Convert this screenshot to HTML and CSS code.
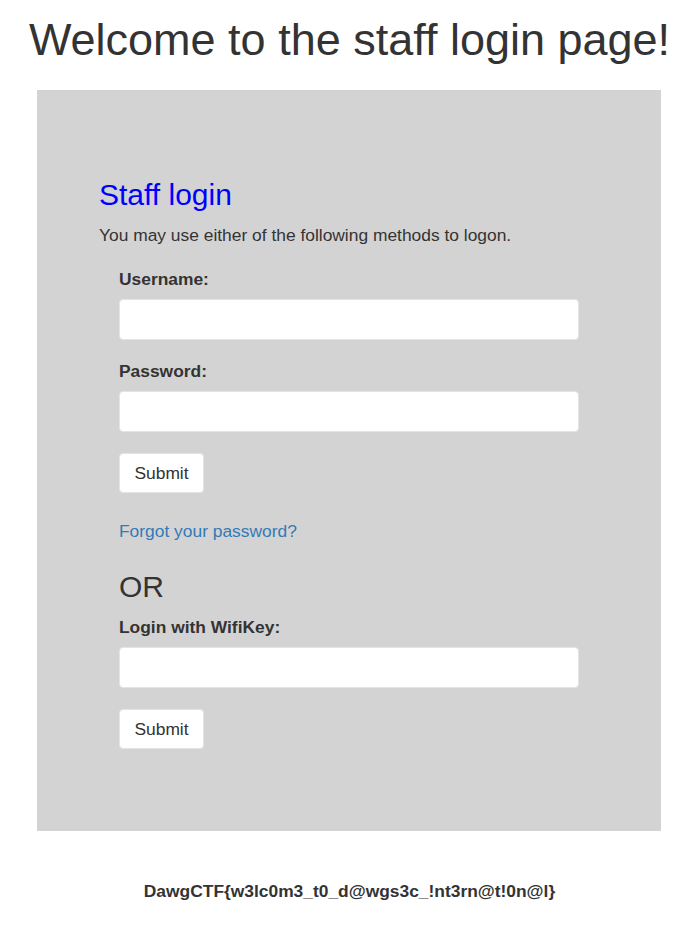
FILE: index.html
```html
<!DOCTYPE html>
<html lang="en">
<head>
<meta charset="utf-8">
<title>Staff login</title>
<link rel="stylesheet" href="styles.css">
</head>
<body>
<h1 class="page-title">Welcome to the staff login page!</h1>
<div class="login-box">
  <h2 class="login-title">Staff login</h2>
  <p class="login-intro">You may use either of the following methods to logon.</p>
  <form class="login-form">
    <label class="field-label" for="username">Username:</label>
    <input class="field-input" id="username" type="text">
    <label class="field-label field-label-next" for="password">Password:</label>
    <input class="field-input" id="password" type="password">
    <button class="submit-btn" type="button">Submit</button>
    <a class="forgot-link" href="#">Forgot your password?</a>
    <div class="or-text">OR</div>
    <label class="field-label field-label-wifi" for="wifikey">Login with WifiKey:</label>
    <input class="field-input" id="wifikey" type="text">
    <button class="submit-btn" type="button">Submit</button>
  </form>
</div>
<p class="flag">DawgCTF{w3lc0m3_t0_d@wgs3c_!nt3rn@t!0n@l}</p>
</body>
</html>
```

FILE: styles.css
```css
html, body {
  margin: 0;
  padding: 0;
  background: #ffffff;
}

body {
  font-family: "Liberation Sans", Arial, sans-serif;
  color: #333333;
  font-size: 17.4px;
  line-height: 24px;
  padding-top: 14px;
}

.page-title {
  margin: 0 0 24px;
  font-size: 45px;
  line-height: 52px;
  font-weight: 400;
  text-align: center;
  color: #333333;
}

.login-box {
  width: 624px;
  margin-left: 37px;
  background: #d3d3d3;
  padding: 88px 62px 82px;
  box-sizing: border-box;
}

.login-title {
  margin: 0;
  font-size: 30px;
  line-height: 34px;
  font-weight: 400;
  color: #0000ff;
}

.login-intro {
  margin: 11px 0 0;
}

.login-form {
  display: flex;
  flex-direction: column;
  align-items: flex-start;
  padding-left: 20px;
  margin-top: 20px;
}

.field-label {
  display: block;
  font-weight: 700;
  margin-bottom: 8px;
}

.field-label-next {
  margin-top: 19px;
}

.field-label-wifi {
  margin-top: 11px;
}

.field-input {
  display: block;
  width: 460px;
  height: 41px;
  box-sizing: border-box;
  border: 1px solid #e4e4e4;
  border-radius: 4px;
  background: #ffffff;
  margin: 0;
  padding: 6px 12px;
  font: inherit;
}

.submit-btn {
  display: block;
  margin-top: 21px;
  width: 85px;
  height: 40px;
  box-sizing: border-box;
  border: 1px solid #e4e4e4;
  border-radius: 4px;
  background: #ffffff;
  color: #333333;
  font-family: inherit;
  font-size: 17.4px;
  padding: 0;
}

.forgot-link {
  display: block;
  margin-top: 26px;
  color: #337ab7;
  text-decoration: none;
}

.or-text {
  margin-top: 27px;
  font-size: 30px;
  line-height: 34px;
}

.flag {
  margin: 48px 0 0;
  text-align: center;
  font-weight: 700;
}
```
